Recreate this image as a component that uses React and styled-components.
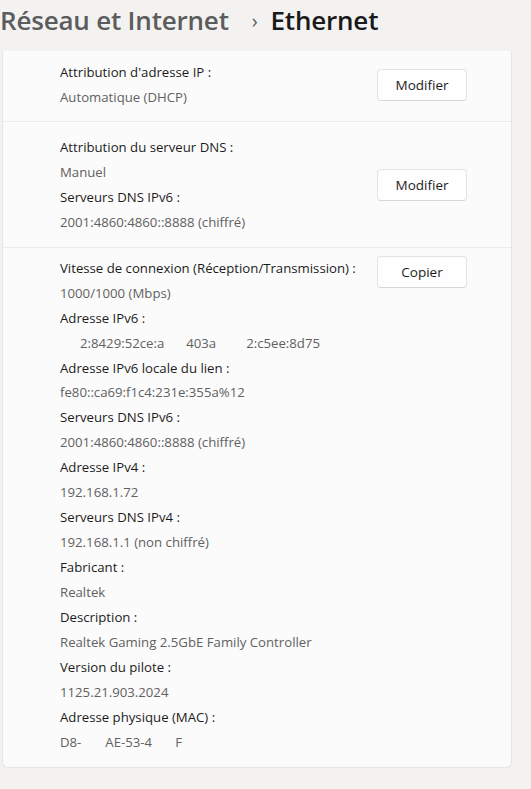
import styled, { createGlobalStyle } from 'styled-components';

const GlobalStyle = createGlobalStyle`
  html, body {
    margin: 0;
    padding: 0;
    background: #f3f2f1;
    font-family: 'Segoe UI', 'Open Sans', 'Liberation Sans', sans-serif;
  }
`;

const Page = styled.div`
  width: 531px;
  height: 789px;
  overflow: hidden;
  background: #f3f2f1;
`;

const Header = styled.h1`
  margin: 0;
  height: 51px;
  display: flex;
  align-items: flex-start;
  gap: 16px;
  padding-top: 3px;
  box-sizing: border-box;
  font-size: 26px;
  font-weight: 600;
  line-height: 35px;
  letter-spacing: -0.2px;
  color: #1a1a1a;
`;

const Crumb = styled.span`
  color: #5c5c5c;
`;

const Chevron = styled.span`
  font-size: 20px;
  color: #5c5c5c;
  font-weight: 400;
  margin: 0 -3px 0 7px;
`;

const Card = styled.div`
  margin-left: 2px;
  width: 510px;
  box-sizing: border-box;
  background: #fbfbfb;
  border: 1px solid #e6e6e6;
  border-top: none;
  border-radius: 0 0 6px 6px;
`;

const Section = styled.div`
  display: flex;
  align-items: ${(p) => (p.$top ? 'flex-start' : 'center')};
  justify-content: space-between;
  padding: ${(p) => p.$pad};
  border-bottom: ${(p) => (p.$last ? 'none' : '1px solid #ebebeb')};
`;

const Details = styled.div`
  display: flex;
  flex-direction: column;
  padding-left: 57px;
`;

const Label = styled.div`
  font-size: 13.2px;
  line-height: 24.95px;
  color: #1b1b1b;
  white-space: nowrap;
`;

const Value = styled(Label)`
  color: #616161;
`;

const Redact = styled.span`
  display: inline-block;
  width: ${(p) => p.$w}px;
`;

const Button = styled.button`
  width: 90px;
  height: 32px;
  margin-right: 44px;
  background: #fefefe;
  border: 1px solid #e3e3e3;
  border-bottom-color: #d6d6d6;
  border-radius: 4px;
  font-family: inherit;
  font-size: 13.5px;
  color: #1b1b1b;
  padding: 0;
`;

const Field = ({ label, children }) => (
  <>
    <Label>{label}</Label>
    <Value>{children}</Value>
  </>
);

export default function App() {
  return (
    <Page>
      <GlobalStyle />
      <Header>
        <Crumb>Réseau et Internet</Crumb>
        <Chevron>›</Chevron>
        <span>Ethernet</span>
      </Header>
      <Card>
        <Section $pad="9px 0 11px">
          <Details>
            <Field label="Attribution d'adresse IP :">Automatique (DHCP)</Field>
          </Details>
          <Button>Modifier</Button>
        </Section>
        <Section $pad="13px 0 12px">
          <Details>
            <Field label="Attribution du serveur DNS :">Manuel</Field>
            <Field label="Serveurs DNS IPv6 :">2001:4860:4860::8888 (chiffré)</Field>
          </Details>
          <Button>Modifier</Button>
        </Section>
        <Section $pad="8px 0 12px" $top $last>
          <Details>
            <Field label="Vitesse de connexion (Réception/Transmission) :">1000/1000 (Mbps)</Field>
            <Field label="Adresse IPv6 :">
              <Redact $w={20} />2:8429:52ce:a<Redact $w={22} />403a<Redact $w={30} />2:c5ee:8d75
            </Field>
            <Field label="Adresse IPv6 locale du lien :">fe80::ca69:f1c4:231e:355a%12</Field>
            <Field label="Serveurs DNS IPv6 :">2001:4860:4860::8888 (chiffré)</Field>
            <Field label="Adresse IPv4 :">192.168.1.72</Field>
            <Field label="Serveurs DNS IPv4 :">192.168.1.1 (non chiffré)</Field>
            <Field label="Fabricant :">Realtek</Field>
            <Field label="Description :">Realtek Gaming 2.5GbE Family Controller</Field>
            <Field label="Version du pilote :">1125.21.903.2024</Field>
            <Field label="Adresse physique (MAC) :">
              D8-<Redact $w={24} />AE-53-4<Redact $w={23} />F
            </Field>
          </Details>
          <Button>Copier</Button>
        </Section>
      </Card>
    </Page>
  );
}
